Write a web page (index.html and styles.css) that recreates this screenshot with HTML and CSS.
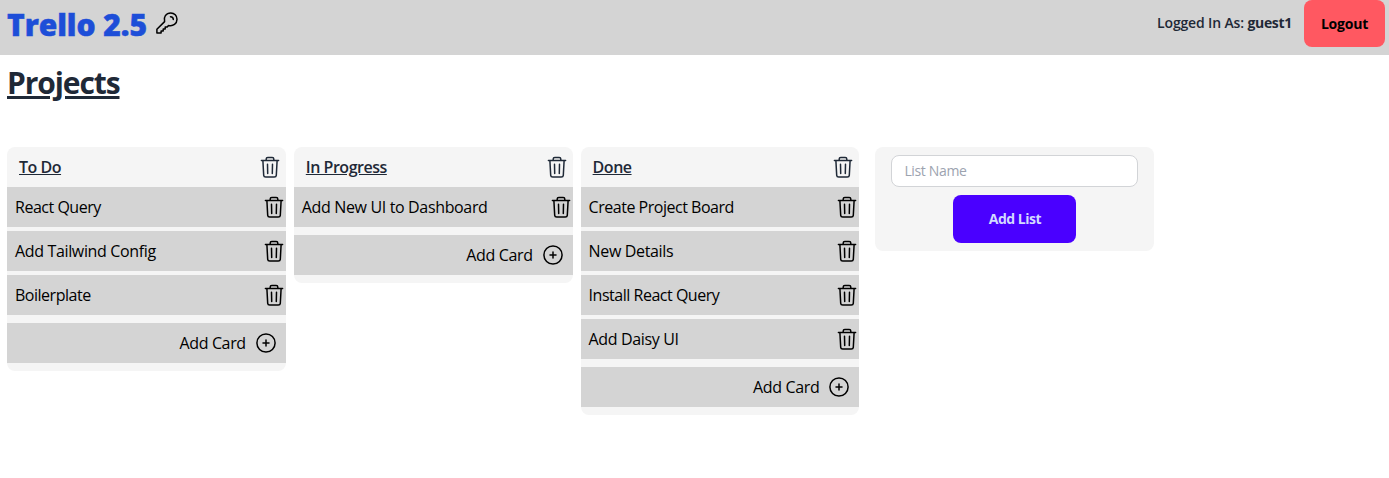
FILE: index.html
```html
<!DOCTYPE html>
<html lang="en">
<head>
<meta charset="utf-8">
<title>Trello 2.5</title>
<link rel="stylesheet" href="styles.css">
</head>
<body>
<svg class="defs" aria-hidden="true">
  <symbol id="trash" viewBox="0 0 24 24">
    <path d="M3.4 5.6H20.6M8.2 5.4V4.1C8.2 3.1 8.8 2.5 9.8 2.5H14.2C15.2 2.5 15.8 3.1 15.8 4.1V5.4M4.9 5.8L5.7 20.4C5.8 21.6 6.5 22.1 7.7 22.1H16.3C17.5 22.1 18.2 21.6 18.3 20.4L19.1 5.8M9.5 9.2L9.7 18.4M14.5 9.2L14.3 18.4"/>
  </symbol>
  <symbol id="plus" viewBox="0 0 24 24">
    <circle cx="12" cy="12" r="9.1"/><path d="M12 9V15M9 12H15"/>
  </symbol>
</svg>
<header class="navbar">
  <h1 class="brand">Trello 2.5</h1>
  <svg class="key" viewBox="0 0 24 24"><path d="M1.9 22.1V18.3L9.6 10.6C8.2 6.2 11 2 15.8 2C19.4 2 22 4.8 22 8.2C22 12.7 18.1 15.6 13.6 14.5L12 16.1H10.2V17.9H8.2V19.9H6.1V22.1Z"/><path d="M15.5 5.7C17.3 5.7 18.3 6.7 18.3 8.5"/></svg>
  <div class="account"><span class="user">Logged In As: <b>guest1</b></span><button class="logout">Logout</button></div>
</header>
<main>
  <h2 class="title">Projects</h2>
  <div class="board">
    <section class="list">
      <header class="list-head"><h3>To Do</h3><svg class="icon"><use href="#trash"/></svg></header>
      <div class="card"><span class="snug">React Query</span><svg class="icon"><use href="#trash"/></svg></div>
      <div class="card"><span>Add Tailwind Config</span><svg class="icon"><use href="#trash"/></svg></div>
      <div class="card"><span class="snug">Boilerplate</span><svg class="icon"><use href="#trash"/></svg></div>
      <div class="add"><span>Add Card</span><svg class="icon"><use href="#plus"/></svg></div>
    </section>
    <section class="list">
      <header class="list-head"><h3>In Progress</h3><svg class="icon"><use href="#trash"/></svg></header>
      <div class="card"><span>Add New UI to Dashboard</span><svg class="icon"><use href="#trash"/></svg></div>
      <div class="add"><span>Add Card</span><svg class="icon"><use href="#plus"/></svg></div>
    </section>
    <section class="list">
      <header class="list-head"><h3>Done</h3><svg class="icon"><use href="#trash"/></svg></header>
      <div class="card"><span class="snug">Create Project Board</span><svg class="icon"><use href="#trash"/></svg></div>
      <div class="card"><span>New Details</span><svg class="icon"><use href="#trash"/></svg></div>
      <div class="card"><span class="snug">Install React Query</span><svg class="icon"><use href="#trash"/></svg></div>
      <div class="card"><span>Add Daisy UI</span><svg class="icon"><use href="#trash"/></svg></div>
      <div class="add"><span>Add Card</span><svg class="icon"><use href="#plus"/></svg></div>
    </section>
    <form class="new-list">
      <input type="text" placeholder="List Name">
      <button type="button">Add List</button>
    </form>
  </div>
</main>
</body>
</html>
```

FILE: styles.css
```css
* { box-sizing: border-box; margin: 0; }
body { font: 16px/24px "Segoe UI", "Open Sans", sans-serif; color: #1f2937; background: #fff; overflow: hidden; }
button, input { font: inherit; border: 0; }
.defs { display: none; }
svg { fill: none; stroke: currentColor; stroke-width: 1.5; stroke-linecap: round; stroke-linejoin: round; flex: none; }
.navbar { height: 55px; display: flex; background: #d4d4d4; padding: 0 4px 0 7px; }
.brand { color: #1d4ed8; font-size: 30px; line-height: 36px; font-weight: 900; -webkit-text-stroke: 0.5px #1d4ed8; padding-top: 7px; letter-spacing: -0.05px; white-space: nowrap; width: 148px; }
.key { width: 24px; height: 24px; margin-top: 11px; color: #000; }
.account { margin-left: auto; display: flex; align-items: flex-start; gap: 12px; font-size: 14px; }
.user { font-weight: 600; line-height: 20px; padding-top: 13px; letter-spacing: -0.15px; }
.user b { font-weight: 700; letter-spacing: -0.3px; }
.logout { width: 81px; height: 47px; border-radius: 8px; background: #ff5861; color: #000; font-weight: 700; font-size: 14px; letter-spacing: -0.2px; padding: 0; }
.title { font-size: 30px; line-height: 36px; font-weight: 700; text-decoration: underline; text-decoration-thickness: 3px; padding: 10px 7px 0; letter-spacing: -1.1px; }
.board { display: flex; align-items: flex-start; padding: 46px 7px 0; gap: 8px; }
.list { width: 278.8px; background: #f5f5f5; border-radius: 8px; padding-bottom: 8px; }
.list-head { height: 40px; display: flex; align-items: center; justify-content: space-between; padding: 0 4px 0 12px; }
.list-head h3 { font-size: 16px; font-weight: 600; text-decoration: underline; letter-spacing: -0.48px; }
.icon { width: 24px; height: 24px; }
.card, .add { height: 40px; display: flex; align-items: center; background: #d4d4d4; color: #000; letter-spacing: -0.35px; }
.card { justify-content: space-between; padding-left: 8px; margin-bottom: 4px; }
.card .snug { letter-spacing: -0.48px; }
.add { justify-content: flex-end; gap: 8px; padding-right: 8px; margin-top: 8px; }
.new-list { width: 279px; height: 104px; margin-left: 8px; padding: 8px 16px; display: flex; flex-direction: column; align-items: center; gap: 8px; background: #f5f5f5; border-radius: 8px; }
.new-list input { width: 247px; height: 32px; border: 1px solid #d2d4d7; border-radius: 8px; background: #fff; padding: 0 12px 1px; font-size: 14px; letter-spacing: -0.35px; }
.new-list input::placeholder { color: #9ca3af; }
.new-list button { width: 123px; height: 48px; border-radius: 8px; background: #4a00ff; color: #d2d9ff; font-size: 14px; font-weight: 700; letter-spacing: -0.5px; }
```
